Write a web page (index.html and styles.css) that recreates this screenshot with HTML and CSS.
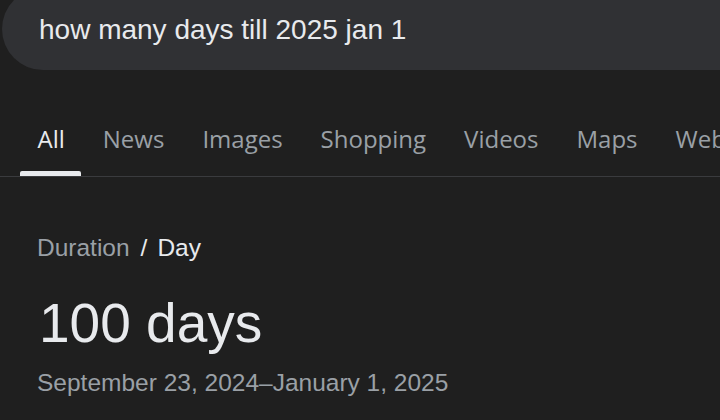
FILE: index.html
```html
<!DOCTYPE html>
<html lang="en">
<head>
<meta charset="utf-8">
<title>how many days till 2025 jan 1</title>
<link rel="stylesheet" href="styles.css">
</head>
<body>
<div class="search">
  <span class="query">how many days till 2025 jan 1</span>
</div>
<nav class="tabs">
  <span class="tab active">All</span>
  <span class="tab">News</span>
  <span class="tab">Images</span>
  <span class="tab">Shopping</span>
  <span class="tab">Videos</span>
  <span class="tab">Maps</span>
  <span class="tab">Web</span>
</nav>
<main class="result">
  <div class="crumbs"><span class="crumb-muted">Duration</span><span class="sep">/</span><span class="crumb-current">Day</span></div>
  <div class="answer">100 days</div>
  <div class="range">September 23, 2024–January 1, 2025</div>
</main>
</body>
</html>
```

FILE: styles.css
```css
html, body {
  margin: 0;
  padding: 0;
  background: #1f1f1f;
  overflow: hidden;
  width: 720px;
  height: 420px;
}

body {
  font-family: "Liberation Sans", Arial, sans-serif;
  color: #e8eaed;
}

.search {
  box-sizing: border-box;
  margin-top: -12px;
  margin-left: 2px;
  height: 82px;
  width: 718px;
  padding: 26px 0 0 37px;
  background: #303134;
  border-radius: 41px 0 0 41px;
}

.query {
  font-size: 28px;
  line-height: 32px;
  color: #e8eaed;
  white-space: nowrap;
}

.tabs {
  display: flex;
  white-space: nowrap;
  overflow: hidden;
  padding: 54.5px 0 0 19px;
  border-bottom: 1px solid #3a3b3e;
}

.tab {
  position: relative;
  font-family: "Open Sans", Roboto, sans-serif;
  font-size: 24px;
  line-height: 28px;
  padding: 0 19px 23.5px;
  color: #9aa0a6;
  flex: none;
}

.tab:first-child {
  padding-left: 18.5px;
  padding-right: 19px;
}

.tab.active {
  color: #e8eaed;
}

.tab.active::after {
  content: "";
  position: absolute;
  left: 1px;
  right: 3px;
  bottom: 0;
  height: 5px;
  background: #e8eaed;
  border-radius: 2px 2px 0 0;
}

.result {
  padding: 56.5px 0 0 37px;
}

.crumbs {
  font-size: 24.5px;
  line-height: 28px;
  white-space: nowrap;
}

.crumb-muted {
  color: #9aa0a6;
}

.sep {
  color: #e8eaed;
  margin: 0 10px 0 11px;
}

.crumb-current {
  color: #e8eaed;
}

.answer {
  margin-top: 29px;
  margin-left: 2px;
  font-size: 55px;
  line-height: 64px;
  color: #e8eaed;
  white-space: nowrap;
}

.range {
  margin-top: 14.5px;
  font-size: 24.5px;
  line-height: 28px;
  color: #9aa0a6;
  white-space: nowrap;
}
```
